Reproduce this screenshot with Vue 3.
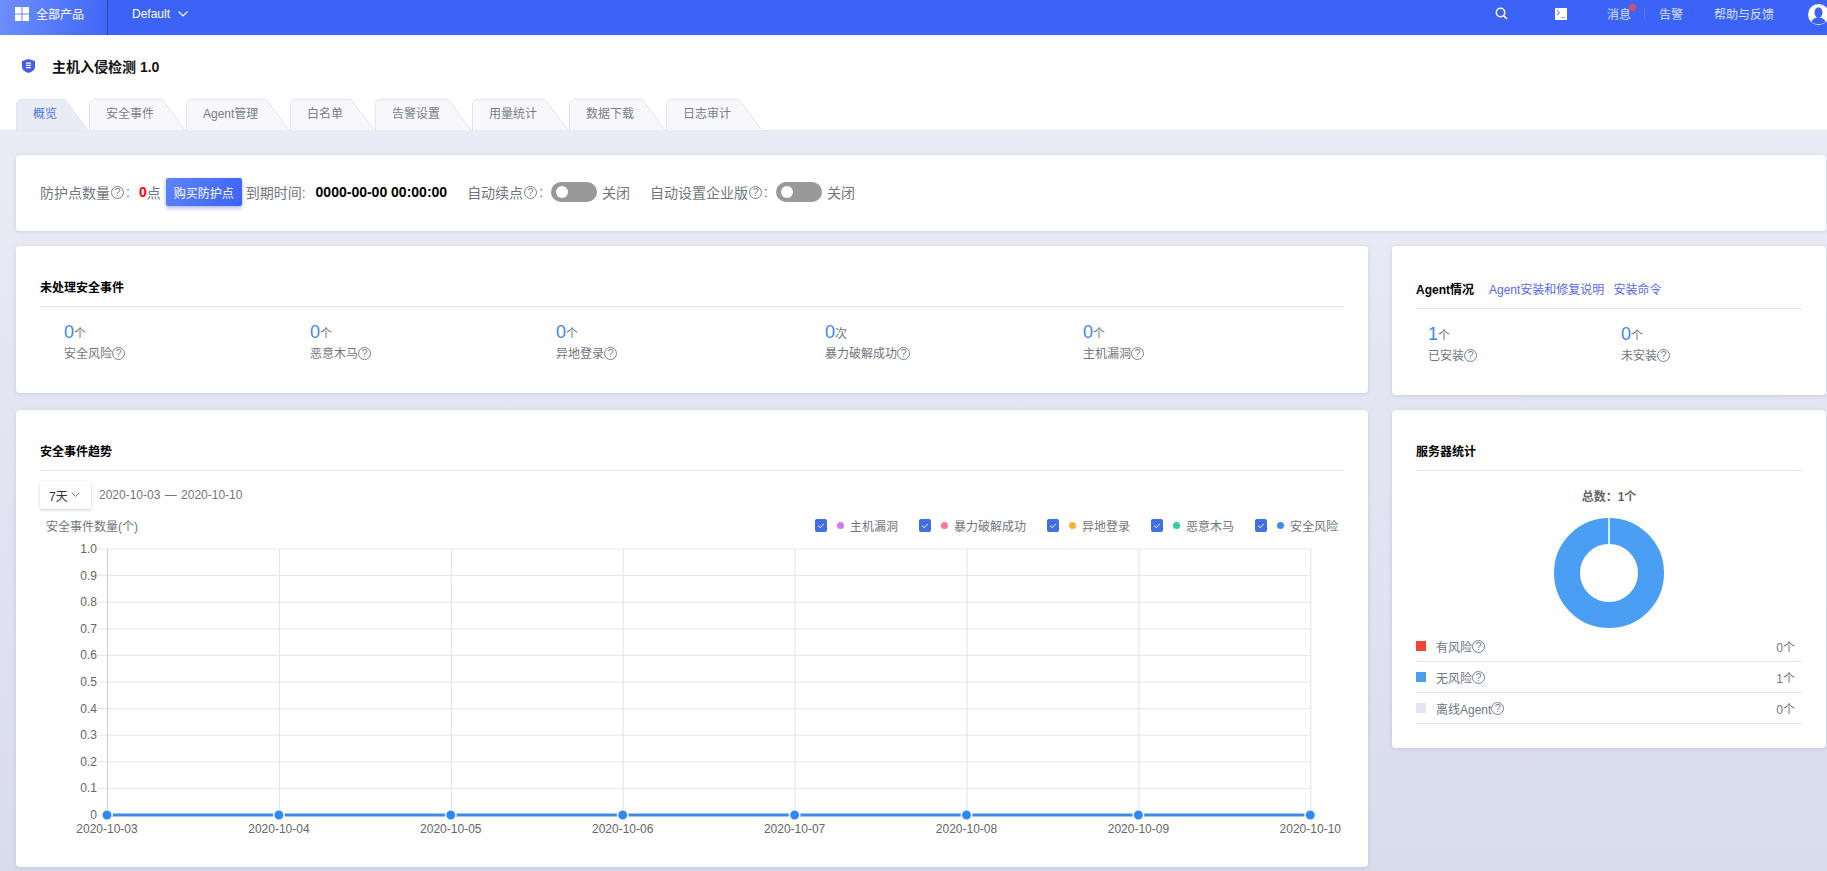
<script setup>
const tabs = [
  { name: '概览', w: 73, active: true },
  { name: '安全事件', w: 97 },
  { name: 'Agent管理', w: 104 },
  { name: '白名单', w: 85 },
  { name: '告警设置', w: 97 },
  { name: '用量统计', w: 97 },
  { name: '数据下载', w: 97 },
  { name: '日志审计', w: 97 },
]
const eventStats = [
  { v: 0, u: '个', label: '安全风险' },
  { v: 0, u: '个', label: '恶意木马' },
  { v: 0, u: '个', label: '异地登录' },
  { v: 0, u: '次', label: '暴力破解成功' },
  { v: 0, u: '个', label: '主机漏洞' },
]
const legend = [
  { label: '主机漏洞', color: '#d774ee' },
  { label: '暴力破解成功', color: '#fb7a96' },
  { label: '异地登录', color: '#fbb03b' },
  { label: '恶意木马', color: '#2fcf9b' },
  { label: '安全风险', color: '#3b8bf8' },
]
const serverRows = [
  { label: '有风险', color: '#f44336', v: '0个' },
  { label: '无风险', color: '#4a9ff5', v: '1个' },
  { label: '离线Agent', color: '#e3e6f0', v: '0个' },
]
const dates = ['2020-10-03', '2020-10-04', '2020-10-05', '2020-10-06', '2020-10-07', '2020-10-08', '2020-10-09', '2020-10-10']
const yLabels = ['1.0', '0.9', '0.8', '0.7', '0.6', '0.5', '0.4', '0.3', '0.2', '0.1', '0']
const xAt = (i) => 67 + 171.9 * i
const yAt = (i) => 14 + 26.6 * i
</script>

<template>
  <div class="page">
    <header class="topbar">
      <div class="brand">
        <svg class="grid-icon" width="14" height="14" viewBox="0 0 14 14" fill="#fff">
          <rect width="6.5" height="6.5" />
          <rect x="7.5" width="6.5" height="6.5" />
          <rect y="7.5" width="6.5" height="6.5" />
          <rect x="7.5" y="7.5" width="6.5" height="6.5" />
        </svg>
        <span>全部产品</span>
      </div>
      <div class="region">
        <span>Default</span>
        <svg width="12" height="8" viewBox="0 0 12 8" fill="none" stroke="#fff" stroke-width="1.2"><path d="M1.5 1.5 6 6l4.5-4.5" /></svg>
      </div>
      <svg class="search" width="13" height="13" viewBox="0 0 13 13" fill="none" stroke="#fff" stroke-width="1.5">
        <circle cx="5.5" cy="5.5" r="4.2" />
        <path d="M8.6 8.6 12 12" />
      </svg>
      <svg class="terminal" width="12" height="12" viewBox="0 0 12 12">
        <rect width="12" height="12" rx="0.5" fill="#fff" />
        <path d="M2 2.5 4.5 4.8 2 7" fill="none" stroke="#3b63f8" stroke-width="1" />
        <path d="M6 9.5h4" stroke="#8ea5fa" stroke-width="1" />
      </svg>
      <span class="top-link msg">消息<i class="msg-dot"></i></span>
      <i class="top-sep"></i>
      <span class="top-link alert">告警</span>
      <span class="top-link help-link">帮助与反馈</span>
      <svg class="avatar" width="21" height="21" viewBox="0 0 21 21">
        <circle cx="10.5" cy="10.5" r="10.5" fill="#fff" />
        <ellipse cx="10.5" cy="8.5" rx="4" ry="5.2" fill="#3b63f8" />
        <path d="M3.5 18c1-3.6 4-4.6 7-4.6s6 1 7 4.6c-2 1.6-4.4 2.2-7 2.2s-5-.6-7-2.2z" fill="#3b63f8" />
      </svg>
    </header>

    <div class="title-row">
      <svg class="shield" width="13" height="14" viewBox="0 0 13 14">
        <path d="M6.5 0 13 2v5.5c0 3.2-2.8 5.3-6.5 6.5C2.800 12.800 0 10.700 0 7.500V2z" fill="#4a5cf0" />
        <path d="M4 4.200h5M4 6.400h5M4 8.600h5" stroke="#fff" stroke-width="1.200" />
      </svg>
      <h1>主机入侵检测 1.0</h1>
    </div>

    <nav class="tabs">
      <div v-for="t in tabs" :key="t.name" class="tab" :class="{ active: t.active }" :style="{ width: t.w + 'px' }">
        <svg class="tab-shape" :width="t.w" height="32" :viewBox="`0 0 ${t.w} 32`">
          <path
            :d="`M0.500 32V6Q0.500 0.500 6 0.500H${t.w - 24}L${t.w - 0.5} 32Z`"
            :fill="t.active ? '#e9ebf5' : '#f8f8fc'"
            stroke="#e0e3f1"
          />
        </svg>
        <span class="tab-label">{{ t.name }}</span>
      </div>
    </nav>

    <main class="content">
      <section class="card summary">
        <span>防护点数量</span><i class="help">?</i><span class="colon">:</span>
        <b class="zero">0</b><span>点</span>
        <button class="buy" type="button">购买防护点</button>
        <span class="expire">到期时间:</span>
        <b class="date-val">0000-00-00 00:00:00</b>
        <span class="auto-a">自动续点</span><i class="help">?</i><span class="colon">:</span>
        <span class="switch sw-a"><i></i></span><span class="sw-text">关闭</span>
        <span class="auto-b">自动设置企业版</span><i class="help">?</i><span class="colon">:</span>
        <span class="switch sw-b"><i></i></span><span class="sw-text">关闭</span>
      </section>

      <div class="columns">
        <div class="col-left">
          <section class="card events">
            <h2 class="card-title">未处理安全事件</h2>
            <div class="stat-grid">
              <div v-for="s in eventStats" :key="s.label" class="stat">
                <div class="stat-num"><em>{{ s.v }}</em>{{ s.u }}</div>
                <div class="stat-label">{{ s.label }}<i class="help">?</i></div>
              </div>
            </div>
          </section>

          <section class="card trend">
            <h2 class="card-title">安全事件趋势</h2>
            <div class="range">
              <div class="select">
                <span>7天</span>
                <svg width="9" height="6" viewBox="0 0 9 6" fill="none" stroke="#666" stroke-width="0.9"><path d="M.8.8 4.500 4.500 8.200.8" /></svg>
              </div>
              <span class="range-text">2020-10-03 — 2020-10-10</span>
            </div>
            <div class="chart-head">
              <span>安全事件数量(个)</span>
              <div class="legend">
                <label v-for="l in legend" :key="l.label" class="legend-item">
                  <svg class="check" width="12" height="13" viewBox="0 0 12 13">
                    <rect width="12" height="13" rx="2" fill="#4270e4" />
                    <path d="M3.200 6.800 5.200 8.600 8.800 5" fill="none" stroke="#fff" stroke-width="1" />
                  </svg>
                  <i class="legend-dot" :style="{ background: l.color }"></i>
                  <span>{{ l.label }}</span>
                </label>
              </div>
            </div>
            <svg class="chart" width="1304" height="310" viewBox="0 0 1304 310">
              <line v-for="(y, i) in yLabels" :key="'h' + y" x1="57" :y1="yAt(i)" x2="1271" :y2="yAt(i)" stroke="#e6e6e6" />
              <line v-for="(d, i) in dates" :key="'v' + d" :x1="xAt(i) + 0.5" y1="14" :x2="xAt(i) + 0.5" y2="284" :stroke="i === 0 ? '#cccccc' : '#e2e2e2'" />
              <text v-for="(y, i) in yLabels" :key="'yl' + y" x="57" :y="yAt(i) + 4" text-anchor="end" class="axis-text">{{ y }}</text>
              <text v-for="(d, i) in dates" :key="'xl' + d" :x="xAt(i)" y="298" text-anchor="middle" class="axis-text">{{ d }}</text>
              <line x1="67" y1="280" x2="1271" y2="280" stroke="#3f8ae6" stroke-width="3" />
              <circle v-for="(d, i) in dates" :key="'c' + d" :cx="xAt(i)" cy="280" r="5.200" fill="#2f88f8" stroke="#fff" stroke-width="1.500" />
            </svg>
          </section>
        </div>

        <div class="col-right">
          <section class="card agent">
            <div class="agent-head">
              <h2>Agent情况</h2>
              <a>Agent安装和修复说明</a>
              <a>安装命令</a>
            </div>
            <div class="agent-stats">
              <div class="stat">
                <div class="stat-num"><em>1</em>个</div>
                <div class="stat-label">已安装<i class="help">?</i></div>
              </div>
              <div class="stat">
                <div class="stat-num"><em>0</em>个</div>
                <div class="stat-label">未安装<i class="help">?</i></div>
              </div>
            </div>
          </section>

          <section class="card servers">
            <h2 class="card-title">服务器统计</h2>
            <div class="total">总数：1个</div>
            <svg class="donut" width="110" height="110" viewBox="0 0 110 110">
              <circle cx="55" cy="55" r="42" fill="none" stroke="#4a9ff5" stroke-width="26" />
              <line x1="55" y1="0" x2="55" y2="26" stroke="#fff" stroke-width="1.500" />
            </svg>
            <div v-for="r in serverRows" :key="r.label" class="server-row">
              <i class="swatch" :style="{ background: r.color }"></i>
              <span class="server-name">{{ r.label }}<i class="help">?</i></span>
              <span class="server-val">{{ r.v }}</span>
            </div>
          </section>
        </div>
      </div>
    </main>
  </div>
</template>

<style>
html, body { margin: 0; padding: 0; overflow: hidden; }
</style>

<style scoped>
.page {
  width: 1827px;
  height: 871px;
  overflow: hidden;
  display: flex;
  flex-direction: column;
  background: #fff;
  font-family: "Liberation Sans", "Noto Sans CJK SC", sans-serif;
  font-size: 12px;
  color: #6f7680;
}
.topbar {
  flex: none;
  height: 35px;
  box-sizing: border-box;
  padding-bottom: 8px;
  display: flex;
  align-items: center;
  background: #3b63f8;
  color: #fff;
  overflow: hidden;
}
.brand {
  align-self: flex-start;
  width: 108px;
  height: 35px;
  box-sizing: border-box;
  padding: 0 0 8px 15px;
  display: flex;
  align-items: center;
  background: linear-gradient(100deg, #6f8ffb, #3f66f8);
  border-right: 1px solid #2b48ad;
}
.grid-icon { margin-right: 7px; }
.region {
  margin-left: 24px;
  display: flex;
  align-items: center;
  gap: 7px;
}
.search { margin-left: auto; }
.terminal { margin-left: 47px; }
.top-link { color: #d9e0fd; }
.msg { margin-left: 40px; position: relative; }
.msg-dot {
  position: absolute;
  right: -5px;
  top: -1px;
  width: 7px;
  height: 7px;
  border-radius: 50%;
  background: #d9505f;
}
.top-sep {
  width: 1px;
  height: 11px;
  margin-left: 13px;
  background: #5777e8;
}
.alert { margin-left: 14px; }
.help-link { margin-left: 31px; }
.avatar { margin: 2px -2px 0 34px; flex: none; }

.title-row {
  flex: none;
  height: 64px;
  box-sizing: border-box;
  padding: 0 0 2px 22px;
  display: flex;
  align-items: center;
}
.shield { margin-right: 17px; }
.title-row h1 {
  margin: 0;
  font-size: 14px;
  font-weight: 700;
  color: #111;
}

.tabs {
  flex: none;
  height: 32px;
  box-sizing: border-box;
  padding-left: 16px;
  display: flex;
  border-bottom: 1px solid #e0e3f1;
}
.tab {
  position: relative;
  height: 32px;
  flex: none;
}
.tab-shape { position: absolute; left: 0; top: 0; }
.tab-label {
  position: relative;
  display: block;
  padding-left: 17px;
  line-height: 31px;
  color: #767d88;
}
.tab.active .tab-label { color: #4a78e8; }

.content {
  flex: 1;
  box-sizing: border-box;
  padding: 24px 1px 0 16px;
  background: linear-gradient(180deg, #e9ebf5, #d9dcec);
}
.card {
  background: #fff;
  border-radius: 4px;
  box-shadow: 0 1px 4px rgba(110, 120, 170, 0.22);
  box-sizing: border-box;
}
.help {
  display: inline-block;
  box-sizing: border-box;
  width: 13px;
  height: 13px;
  border: 1px solid #78818f;
  border-radius: 50%;
  font-style: normal;
  font-size: 11px;
  line-height: 11px;
  text-align: center;
  color: #78818f;
  vertical-align: 1.5px;
}
.summary {
  height: 76px;
  padding: 0 0 2px 24px;
  display: flex;
  align-items: center;
  font-size: 14px;
  white-space: nowrap;
}
.summary .help { margin-left: 1px; }
.colon { margin-left: 2px; }
.zero { margin-left: 9px; color: #f00; font-weight: 700; }
.buy {
  width: 76px;
  height: 28px;
  margin-left: 5px;
  padding: 0;
  border: 0;
  border-radius: 2px;
  background: linear-gradient(120deg, #5f83fb, #3b63f8);
  box-shadow: 0 2px 4px rgba(60, 90, 200, 0.45);
  color: #fff;
  font: inherit;
  font-size: 12px;
}
.expire { margin-left: 4px; }
.date-val { margin-left: 10px; color: #000; font-weight: 700; }
.auto-a { margin-left: 20px; }
.auto-b { margin-left: 20px; }
.switch {
  width: 46px;
  height: 20px;
  box-sizing: border-box;
  padding-left: 5px;
  display: flex;
  align-items: center;
  border-radius: 10px;
  background: #999;
}
.sw-a { margin-left: 8px; }
.sw-b { margin-left: 8px; }
.switch i {
  width: 12px;
  height: 12px;
  border-radius: 50%;
  background: #fff;
}
.sw-text { margin-left: 5px; }

.columns {
  margin-top: 15px;
  display: flex;
  gap: 24px;
  align-items: flex-start;
}
.col-left {
  width: 1352px;
  display: flex;
  flex-direction: column;
  gap: 17px;
}
.col-right {
  width: 434px;
  display: flex;
  flex-direction: column;
  gap: 15px;
}
.card-title {
  margin: 0;
  height: 28px;
  line-height: 20px;
  border-bottom: 1px solid #e3e7f0;
  font-size: 12px;
  font-weight: 700;
  color: #000;
}
.events { height: 147px; padding: 32px 24px 0; }
.stat-grid {
  margin-top: 14px;
  padding-left: 24px;
  display: grid;
  grid-template-columns: 246px 246px 269px 258px 1fr;
}
.stat-num {
  height: 23px;
  line-height: 23px;
  font-size: 12px;
}
.stat-num em {
  font-style: normal;
  font-size: 18px;
  color: #3f86f6;
}
.stat-label { line-height: 20px; }
.trend { height: 457px; padding: 32px 24px 0; }
.range {
  margin-top: 10px;
  display: flex;
  align-items: center;
}
.select {
  width: 51px;
  height: 28px;
  box-sizing: border-box;
  padding-left: 9px;
  display: flex;
  align-items: center;
  gap: 3px;
  border-radius: 2px;
  background: #fff;
  box-shadow: 0 1px 3px rgba(100, 110, 150, 0.35);
  color: #333;
}
.range-text { margin-left: 8px; word-spacing: 1px; }
.chart-head {
  margin-top: 6px;
  height: 20px;
  padding: 0 6px;
  display: flex;
  justify-content: space-between;
  align-items: center;
}
.legend { display: flex; gap: 21px; }
.legend-item { display: flex; align-items: center; }
.check { margin-right: 10px; }
.legend-dot {
  width: 7px;
  height: 7px;
  margin-right: 6px;
  border-radius: 50%;
}
.chart { display: block; }
.axis-text {
  font-family: "Liberation Sans", sans-serif;
  font-size: 12px;
  fill: #666;
}
.agent { height: 149px; padding: 32px 24px 0; }
.agent-head {
  height: 30px;
  display: flex;
  align-items: flex-start;
  line-height: 24px;
  border-bottom: 1px solid #e3e7f0;
}
.agent-head h2 {
  margin: 0;
  font-size: 12px;
  font-weight: 700;
  color: #000;
}
.agent-head a { color: #5a66f0; margin-left: 9px; }
.agent-head h2 + a { margin-left: 15px; }
.agent-stats {
  margin-top: 14px;
  padding-left: 12px;
  display: grid;
  grid-template-columns: 193px 1fr;
}
.servers { height: 338px; padding: 32px 24px 0; }
.total {
  margin-top: 16px;
  height: 20px;
  line-height: 20px;
  text-align: center;
  font-weight: 700;
  color: #666;
}
.donut { display: block; margin: 11px auto 3px; }
.server-row {
  height: 31px;
  box-sizing: border-box;
  padding-right: 7px;
  display: flex;
  align-items: center;
  border-bottom: 1px solid #e3e6f0;
}
.swatch { width: 10px; height: 10px; margin-right: 10px; }
.server-val { margin-left: auto; }
</style>
